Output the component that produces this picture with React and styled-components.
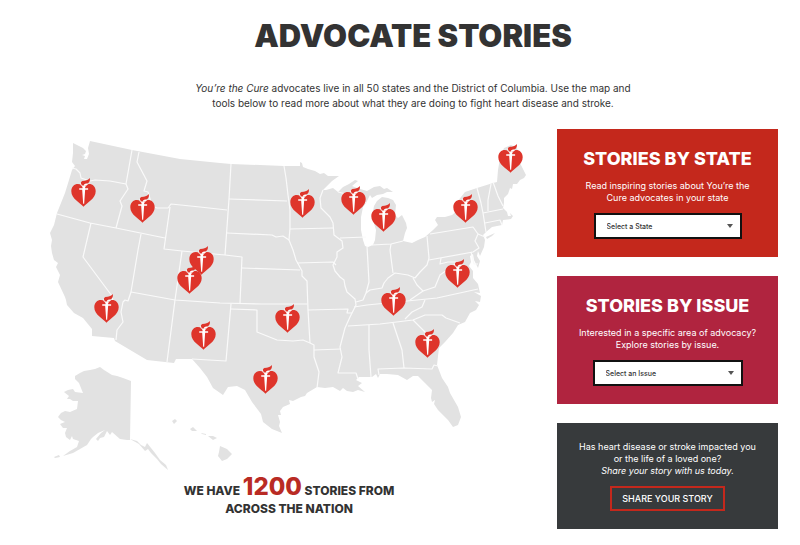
import styled, { createGlobalStyle } from "styled-components";

const GlobalStyle = createGlobalStyle`
  * {
    box-sizing: border-box;
  }
  body {
    margin: 0;
    background-color: #fff;
    color: #333;
    font-family: Inter, "Open Sans", sans-serif;
  }
`

const land = [
  // lower 48
  "M73 143L77 145L83 148L86 151L85 154L82 155L85 156L84 159L87 159L89 154L88 148L90 141L132 150L180 159L220 163L231 164L284 166L300 166L300 162L302 163L303 167L308 169L315 171L320 174L324 173L328 176L339 176L332 181L323 190L326 190L333 188L338 192L343 187L349 184L355 180L358 181L352 186L357 188L367 191L374 187L380 186L384 189L387 188L393 192L387 192L383 194L377 195L372 198L370 195L366 203L363 207L361 217L361 230L363 240L365 246L368 247L373 245L375 240L376 230L372 217L374 206L377 201L382 197L388 198L393 200L396 205L395 215L398 218L402 215L406 223L407 228L405 233L403 241L412 243L418 240L425 237L433 230L438 225L435 220L437 217L445 217L452 215L458 210L457 202L465 192L477 188L493 183L497 182L498 170L500 158L504 148L511 145L517 148L520 163L526 175L524 178L520 180L517 184L513 184L512 189L510 188L508 194L504 198L504 203L503 208L507 212L508 216L511 216L510 213L513 216L511 219L503 220L502 225L492 227L486 232L483 235L485 240L484 247L480 256L478 251L477 256L480 261L478 268L476 264L474 260L473 254L470 256L471 262L469 266L473 271L473 278L478 284L480 293L474 292L481 296L480 302L475 301L479 305L476 310L470 313L465 322L458 325L453 333L445 342L439 348L438 356L437 365L442 378L448 387L450 393L458 407L461 417L458 425L453 427L448 420L438 410L434 404L435 400L432 402L431 398L432 390L425 383L418 376L413 376L407 380L398 375L387 374L380 374L378 378L376 374L372 377L367 377L359 377L356 380L362 383L358 386L365 392L358 390L353 392L347 391L343 388L340 391L333 387L325 388L317 387L307 393L305 396L301 397L293 401L289 400L290 404L283 407L280 411L281 415L278 415L280 422L279 426L282 433L272 429L263 422L261 414L258 410L252 402L245 390L237 386L228 387L223 395L213 388L207 377L200 368L192 359L176 359L174 363L147 360L115 341L114 338L92 336L92 329L83 318L74 313L67 305L66 300L65 297L58 282L60 275L56 267L58 263L54 260L52 253L51 246L52 240L50 233L54 225L57 213L65 193L69 180L72 170L75 166L72 162L73 153Z",
  "M486 237L495 233L492 236L487 239Z",
  // Alaska
  "M75 376L80 373L84 371L90 370L95 369L100 367L104 370L112 375L117 376L123 378L131 381L130 440L127 440L120 439L112 432L110 435L107 431L104 437L100 438L98 441L96 439L101 433L105 430L98 433L93 437L91 439L87 445L73 453L63 456L70 451L77 447L79 441L73 439L72 436L70 440L66 437L65 433L67 428L63 428L60 424L65 422L61 420L58 417L61 413L65 411L70 412L77 409L78 401L73 401L70 399L67 399L69 396L64 392L68 390L73 389L75 392L83 393L81 388L79 383L75 379Z",
  "M130 439L137 441L141 445L145 447L147 443L151 448L155 453L160 460L166 465L168 470L161 464L157 459L151 453L148 449L145 451L139 444Z",
  "M54 457L59 455L60 457L55 458Z",
  // Hawaii
  "M172 421L175 419L177 421L174 424Z",
  "M190 429L193 427L197 431L192 431Z",
  "M201 433L206 434L206 435L202 434ZM208 436L213 436L217 438L213 440Z",
  "M220 446L227 449L232 454L227 459L222 461L218 456L219 452Z",
]

const borders = [
  "M72 168L76 169L80 173L81 178L90 181L95 180L110 181L126 184",
  "M132 150L126 184L128 189L120 201L122 206L116 228",
  "M57 214L90 223L116 228L165 238",
  "M139 152L137 162L147 181L144 191L148 192L152 206L157 208L168 208L171 204L200 207L227 210",
  "M170 207L164 249L182 251L225 255L242 257L240 303",
  "M91 223L83 257L112 296L113 302",
  "M141 234L138 250L131 292L128 301L125 300L123 302L121 312L123 322L117 330L116 340",
  "M182 251L175 300L167 362",
  "M131 292L175 300L220 303L262 304L307 304",
  "M231 304L226 361L192 359",
  "M231 164L229 199L225 255",
  "M229 199L287 201",
  "M227 233L272 235L276 237L283 236L289 240",
  "M242 268L300 270",
  "M284 166L286 178L288 195L289 202L290 210L290 228L289 240L293 250L296 260L302 271L302 276L307 281L308 310L310 343",
  "M290 229L333 228",
  "M297 263L333 262L336 265",
  "M323 190L320 198L321 208L330 217L333 223L334 235L342 241L343 248L337 252L337 257L333 265L335 271L340 277L344 280L345 286L347 292L355 299L356 305L350 317L345 328L340 347L342 357L338 373L356 373L358 379",
  "M338 192L346 194L362 198L366 203",
  "M340 238L366 237",
  "M367 246L369 282L366 293L363 300L356 302",
  "M366 293L370 290L382 288L384 283L388 278L395 273L408 275L415 278L420 272L427 265L429 258L427 236",
  "M372 245L391 244L403 241",
  "M391 244L390 250L393 273",
  "M308 310L348 309L347 313L352 313",
  "M354 307L367 305L407 301L437 298L478 289",
  "M348 326L380 324L413 320L425 315L442 315L446 318L460 323",
  "M425 300L422 307L412 312L405 319",
  "M413 320L425 332L437 350",
  "M231 309L257 310L257 332L267 336L277 340L293 341L303 340L310 343L314 345L314 357L319 372L317 388",
  "M314 350L341 349",
  "M369 325L369 350L371 377",
  "M393 323L402 350L404 368",
  "M379 375L378 369L404 368L432 369L434 365L438 366",
  "M430 234L473 227L478 234L475 241L479 248L473 252L429 260",
  "M471 252L474 264L478 264",
  "M441 258L440 264L448 262L458 262",
  "M413 278L417 285L423 291L410 300",
  "M423 291L435 287L440 275L447 270L458 262L466 268",
  "M477 188L481 203L483 213L486 232",
  "M491 184L488 200L488 211",
  "M493 182L498 196L503 206",
  "M483 213L503 209",
  "M485 223L500 220L502 225",
  "M478 234L485 237",
]

// left and top corner of each marker, in map units
const markers = [
  [71, 178],
  [130, 194],
  [290, 189],
  [341, 186],
  [371, 203],
  [453, 194],
  [498, 144],
  [189, 246],
  [177, 265],
  [94, 294],
  [191, 321],
  [275, 304],
  [253, 365],
  [381, 287],
  [445, 259],
  [415, 329],
]

const StoryMap = () => (
  <Map viewBox="48 129 482 343" role="img" aria-label="Map of advocate stories">
    <defs>
      <symbol id="torch" viewBox="0 0 74 88">
        <path
          fill="#de352b"
          d="M37 87C27 75 0 63 0 40C0 26 9 18 20 18C28 18 34 22 37 27C40 22 46 18 54 18C65 18 74 26 74 40C74 63 47 75 37 87Z"
        />
        <path fill="#fff" d="M27 16L48 14L50 20L46 23H29Z" />
        <path fill="#fff" d="M30 23H46L42 27V31H51V36H42L39 78H36L33 36H24V31H34V27Z" />
        <path fill="#de352b" d="M30 18C27 10 34 8 41 8C48 7 53 4 56 0C58 9 54 16 46 17C40 18 38 20 38 23C34 23 31 21 30 18Z" />
      </symbol>
    </defs>
    {land.map((d) => <path key={d} d={d} fill="#e2e2e2" />)}
    {borders.map((d) => (
      <path key={d} d={d} fill="none" stroke="#fafafa" strokeWidth="1.2" strokeLinejoin="round" />
    ))}
    {markers.map(([x, y]) => (
      <use key={`${x}-${y}`} href="#torch" x={x} y={y} width="25" height="29" />
    ))}
  </Map>
)

const App = () => {
  return (
    <Wrapper>
      <GlobalStyle />
      <Title>ADVOCATE STORIES</Title>
      <Intro>
        <em>You’re the Cure</em> advocates live in all 50 states and the District of Columbia. Use the map and
        <br />
        tools below to read more about what they are doing to fight heart disease and stroke.
      </Intro>
      <Content>
        <MapColumn>
          <StoryMap />
          <Count>
            WE HAVE <Total>1200</Total> STORIES FROM
            <br />
            ACROSS THE NATION
          </Count>
        </MapColumn>
        <Sidebar>
          <Card $color="#c4281c">
            <CardTitle>STORIES BY STATE</CardTitle>
            <CardText id="state-text">
              Read inspiring stories about You’re the
              <br />
              Cure advocates in your state
            </CardText>
            <SelectBox $width="148px">
              <Select aria-labelledby="state-text">
                <option>Select a State</option>
              </Select>
              <Arrow />
            </SelectBox>
          </Card>
          <Card $color="#b0243f">
            <CardTitle>STORIES BY ISSUE</CardTitle>
            <CardText id="issue-text">
              Interested in a specific area of advocacy?
              <br />
              Explore stories by issue.
            </CardText>
            <SelectBox $width="150px">
              <Select aria-labelledby="issue-text">
                <option>Select an Issue</option>
              </Select>
              <Arrow />
            </SelectBox>
          </Card>
          <Card $color="#373a3c">
            <CardText>
              Has heart disease or stroke impacted you
              <br />
              or the life of a loved one?
              <br />
              <em>Share your story with us today.</em>
            </CardText>
            <ShareButton type="button">SHARE YOUR STORY</ShareButton>
          </Card>
        </Sidebar>
      </Content>
    </Wrapper>
  )
}

const Wrapper = styled.main`
  padding: 16px 22px 16px 48px;
`

const Title = styled.h1`
  margin: 0;
  font-size: 31px;
  font-weight: 900;
  line-height: 40px;
  text-align: center;
`

const Intro = styled.p`
  margin: 25px 0 18px;
  font-size: 10px;
  line-height: 15px;
  text-align: center;
`

const Content = styled.div`
  display: flex;
  align-items: flex-start;
  gap: 27px;
`

const MapColumn = styled.section`
  flex: 1;
  min-width: 0;
`

const Map = styled.svg`
  display: block;
  width: 100%;
  height: auto;
`

const Count = styled.p`
  margin: 6px 0 0;
  font-size: 12px;
  font-weight: 800;
  line-height: 18px;
  text-align: center;
`

const Total = styled.strong`
  color: #b92b24;
  font-size: 24px;
  font-weight: 800;
`

const Sidebar = styled.aside`
  flex: none;
  display: flex;
  flex-direction: column;
  gap: 19px;
  width: 221px;
`

const Card = styled.section`
  display: flex;
  flex-direction: column;
  align-items: center;
  padding: 18px 0;
  color: #fff;
  background-color: ${({ $color }) => $color};
`

const CardTitle = styled.h2`
  margin: 0 0 9px;
  font-size: 18px;
  font-weight: 800;
  line-height: 24px;
`

const CardText = styled.p`
  margin: 0 0 9px;
  font-size: 9px;
  line-height: 12px;
  text-align: center;
`

const SelectBox = styled.div`
  position: relative;
  width: ${({ $width }) => $width};
`

const Select = styled.select`
  display: block;
  appearance: none;
  width: 100%;
  height: 26px;
  padding: 0 11px;
  border: 2px solid #111;
  border-radius: 0;
  background-color: #fff;
  color: #333;
  font-family: inherit;
  font-size: 7px;
  font-weight: 500;
`

const Arrow = styled.span`
  position: absolute;
  top: 11px;
  right: 9px;
  border: 3px solid transparent;
  border-top: 4px solid #555;
  border-bottom: none;
  pointer-events: none;
`

const ShareButton = styled.button`
  height: 25px;
  padding: 0 10px;
  border: 2px solid #c4281c;
  background-color: transparent;
  color: #fff;
  font-family: inherit;
  font-size: 9px;
  font-weight: 500;
  cursor: pointer;
`

export default App;
